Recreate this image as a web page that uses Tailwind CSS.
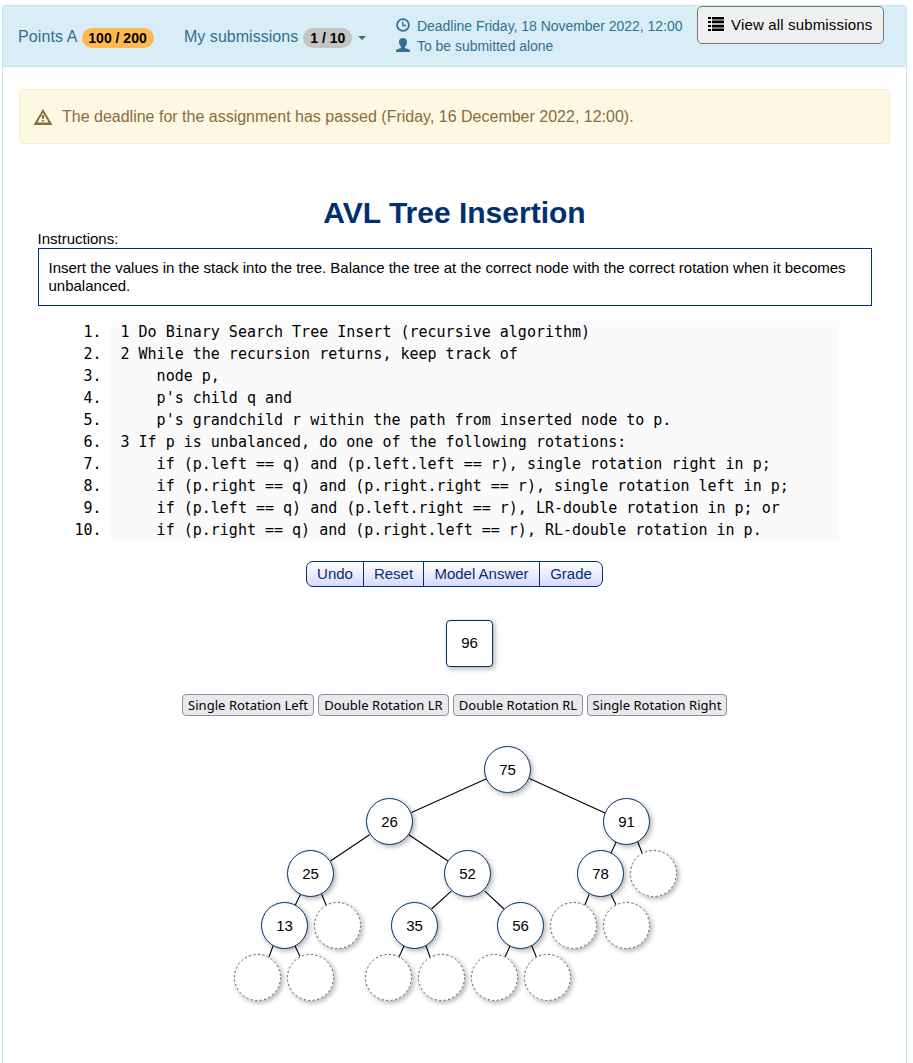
<!DOCTYPE html>
<html lang="en">
<head>
<meta charset="utf-8">
<title>AVL Tree Insertion</title>
<script src="https://cdn.jsdelivr.net/npm/@tailwindcss/browser@4"></script>
</head>
<body class="bg-white font-['Liberation_Sans',sans-serif] text-black overflow-hidden">
<main class="ml-[2px] mt-[5px] w-[905px] h-[1100px] border border-[#bce8f1] rounded-t-[4px]">
  <header class="flex items-start h-[61px] bg-[#d9edf7] border-b border-[#bce8f1] rounded-t-[3px] text-[#31708f] whitespace-nowrap">
    <div class="flex items-center ml-[15px] mt-[20px] h-[22px] w-[166px] text-[16px]">
      <span class="tracking-[0.1px]">Points A</span>
      <span class="ml-[4px] mt-[2px] h-5 w-[72px] rounded-[10px] bg-[#ffb84d] text-black font-bold text-[14px] leading-5 text-center">100 / 200</span>
    </div>
    <div class="flex items-center mt-[20px] h-[22px] w-[212px] text-[16px]">
      <span class="tracking-[0.03px]">My submissions</span>
      <span class="ml-[5px] mt-[2px] h-5 w-[49px] rounded-[10px] bg-[#c4c4c4] text-black font-bold text-[14px] leading-5 text-center">1 / 10</span>
      <svg class="ml-[6px] mt-[2px]" width="8" height="4" viewBox="0 0 8 4"><path d="M0 0h8L4 4z" fill="#31708f"/></svg>
    </div>
    <div class="mt-[10px] w-[301px] text-[14px] leading-5">
      <div class="flex items-center gap-[7px]">
        <svg class="-mt-[2px]" width="14" height="14" viewBox="0 0 14 14" fill="none" stroke="#31708f"><circle cx="7" cy="7" r="5.9" stroke-width="1.8"/><path d="M6.800 3.300v4.200h3.300" stroke-width="1.300"/></svg>
        <span class="tracking-[-0.03px]">Deadline Friday, 18 November 2022, 12:00</span>
      </div>
      <div class="flex items-center gap-[7px]">
        <svg class="-mt-[2px]" width="14" height="14" viewBox="0 0 14 14" fill="#31708f"><path d="M7 0C4.400 0 3 1.500 3 3.900c0 2 .9 3.800 2 4.900v1.100L1.300 11.200C.4 11.600 0 12.200 0 14h14c0-1.800-.4-2.400-1.300-2.800L9 9.900V8.800c1.100-1.100 2-2.900 2-4.900C11 1.500 9.600 0 7 0z"/></svg>
        <span class="tracking-[-0.03px]">To be submitted alone</span>
      </div>
    </div>
    <button class="flex items-start w-[187px] h-[38px] rounded-[5px] border border-[#767676] bg-[#efefef] text-black text-[15px] pl-[10px] pt-[9px]">
      <svg class="mt-[1px]" width="16" height="14" viewBox="0 0 16 14"><path d="M0 0h3v2H0zM0 4h3v2H0zM0 8h3v2H0zM0 12h3v2H0zM4 0h12v2.500H4zM4 3.600h12v2.700H4zM4 7.700h12v2.700H4zM4 11.500h12V14H4z"/></svg>
      <span class="ml-[7px] leading-[18px] tracking-[0.16px]">View all submissions</span>
    </button>
  </header>

  <div class="mt-[22px] ml-[16px] w-[871px] h-[55px] flex items-center rounded-[4px] border border-[#faebcc] bg-[#fcf8e3] text-[#8a6d3b] text-[16px]">
    <svg class="ml-[14px] mt-[1px]" width="18" height="16" viewBox="0 0 18 16"><path fill-rule="evenodd" fill="#8a6d3b" d="M9 0L18.500 16H-.5zM9 3.800L3.400 13.500h11.200z"/><path d="M7.900 6h2.200v3.800H7.900zM7.900 11h2.200v1.500H7.900z" fill="#8a6d3b"/></svg>
    <span class="ml-[10px]">The deadline for the assignment has passed (Friday, 16 December 2022, 12:00).</span>
  </div>

  <section class="ml-[35px] mt-[51px] w-[834px]">
    <h1 class="mr-[1px] text-center text-[30px] leading-[36px] h-[35px] font-bold text-[#003070]">AVL Tree Insertion</h1>
    <p class="text-[15px] leading-[18px] -ml-[0.5px]">Instructions:</p>
    <div class="h-[58px] border border-[#003070] pl-[9.5px] pr-[10px] pt-[10px] text-[15px] leading-[18px]">Insert the values in the stack into the tree. Balance the tree at the correct node with the correct rotation when it becomes unbalanced.</div>

    <div class="mt-[15px] flex font-['DejaVu_Sans_Mono',monospace] text-[15px] leading-[22px] whitespace-pre">
      <div class="w-[63.5px] mr-[9.5px] text-right">1.
2.
3.
4.
5.
6.
7.
8.
9.
10.</div>
      <div class="w-[728px] bg-[#fafafa] pl-[9.5px]">1 Do Binary Search Tree Insert (recursive algorithm)
2 While the recursion returns, keep track of
    node p,
    p's child q and
    p's grandchild r within the path from inserted node to p.
3 If p is unbalanced, do one of the following rotations:
    if (p.left == q) and (p.left.left == r), single rotation right in p;
    if (p.right == q) and (p.right.right == r), single rotation left in p;
    if (p.left == q) and (p.left.right == r), LR-double rotation in p; or
    if (p.right == q) and (p.right.left == r), RL-double rotation in p.</div>
    </div>

    <div class="mt-[20px] ml-[268px] w-[297px] h-[26px] flex rounded-[7px] border border-[#003070] divide-x divide-[#003070] bg-linear-to-b from-white to-[#d9d9fb] text-[#003070] text-[15px] leading-[24px] text-center">
      <button class="w-[57px] pb-px leading-[23px]">Undo</button>
      <button class="w-[60px] pb-px leading-[23px]">Reset</button>
      <button class="w-[116px] pb-px leading-[23px]">Model Answer</button>
      <button class="w-[62px] pb-px leading-[23px]">Grade</button>
    </div>

    <div class="mt-[33px] ml-[408px] size-[47px] rounded-[4px] border border-[#003070] bg-white shadow-[2px_2px_5px_rgba(0,0,0,0.3)] text-[15px] leading-[43px] text-center">96</div>

    <div class="mt-[27px] ml-[144px] flex gap-[4px] font-['Noto_Sans',sans-serif] text-[13px] tracking-[0.04px] leading-[20px] whitespace-nowrap text-center">
      <button class="w-[132px] h-[22px] rounded-[4px] border border-[#8f8f9d] bg-[#e9e9ed]">Single Rotation Left</button>
      <button class="w-[131px] h-[22px] rounded-[4px] border border-[#8f8f9d] bg-[#e9e9ed]">Double Rotation LR</button>
      <button class="w-[130px] h-[22px] rounded-[4px] border border-[#8f8f9d] bg-[#e9e9ed]">Double Rotation RL</button>
      <button class="w-[140px] h-[22px] rounded-[4px] border border-[#8f8f9d] bg-[#e9e9ed]">Single Rotation Right</button>
    </div>
  </section>

  <div id="tree" class="relative mt-[30px] ml-[231px] w-[444px] h-[256px]">
    <svg class="absolute inset-0" width="444" height="256" stroke="#000" stroke-width="1.1" fill="none">
      <path d="M253 32.500L177.500 66.500M295.500 32.500L371 67M135.500 88.800L96.500 115M174.800 88.800L214 115M382.200 96L377 107M403.800 96L408.300 107.500M217.200 145.200L197.500 163M250.800 145.200L270 163M355 148.500L350.700 159.500M377 148.500L382.300 159.500M66.500 148.500L61 159.500M87.800 148.500L92.300 159.500M39 200L35 211M61 200L66.300 211M170 200L165 211M192 200L196 211M276 200L271 211M297.800 200L302.300 211"/>
    </svg>
  </div>
</main>
<script>
  // [left, level, value]; an empty value is a free slot
  const nodes = [
    [250, 0, '75'], [132, 1, '26'], [369, 1, '91'],
    [53, 2, '25'], [210, 2, '52'], [343, 2, '78'], [396, 2, ''],
    [27, 3, '13'], [80, 3, ''], [157, 3, '35'], [263, 3, '56'], [316, 3, ''], [369, 3, ''],
    [0, 4, ''], [53, 4, ''], [131, 4, ''], [184, 4, ''], [237, 4, ''], [290, 4, '']
  ];
  const tree = document.getElementById('tree');
  for (const [x, level, value] of nodes) {
    const el = document.createElement('div');
    el.className = value
      ? 'absolute size-[47px] rounded-full border border-[#003070] bg-white shadow-[2px_2px_5px_rgba(0,0,0,0.3)] text-[15px] leading-[45px] text-center'
      : 'absolute size-[47px] rounded-full bg-white shadow-[2px_2px_5px_rgba(0,0,0,0.3)]';
    el.style.left = x + 'px';
    el.style.top = level * 52 + 'px';
    if (value) el.textContent = value;
    else el.innerHTML = '<svg width="47" height="47" viewBox="0 0 47 47" fill="none" stroke="#606060"><circle cx="23.5" cy="23.5" r="23" stroke-dasharray="2.3 2.2"/></svg>';
    tree.appendChild(el);
  }
</script>
</body>
</html>
